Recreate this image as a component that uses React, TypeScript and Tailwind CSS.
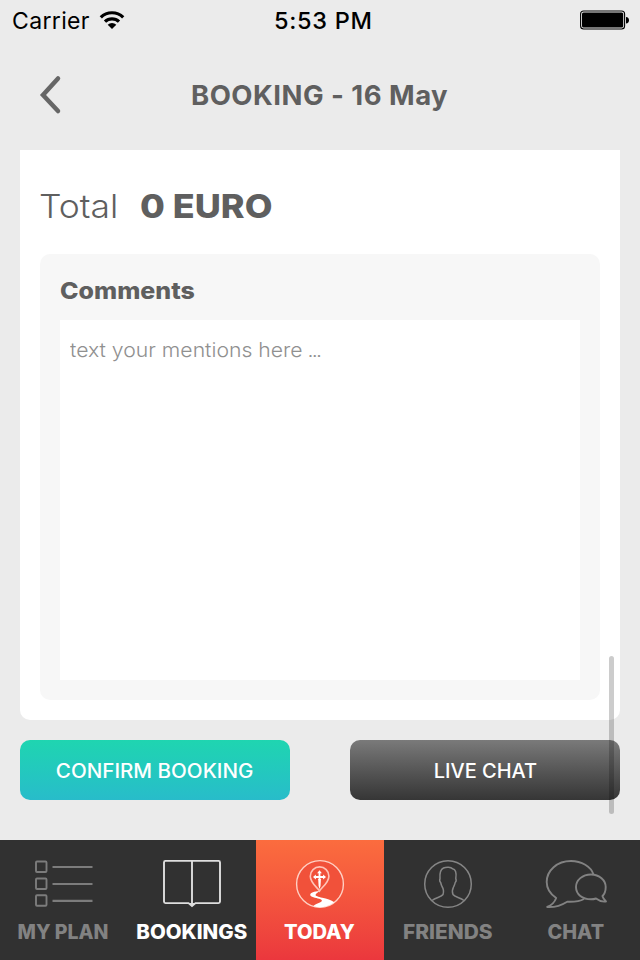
import React from "react";

function StatusBar() {
  return (
    <div className="relative flex h-10 items-center justify-between pl-3 pr-[11px] text-black">
      <div className="flex items-center gap-[9px]">
        <span className="pt-px text-[23px] leading-10 tracking-[0.35px]">Carrier</span>
        <svg width="26" height="20" viewBox="0 0 26 20" fill="none" stroke="#000" strokeWidth="3.2">
          <path d="M1.8 7.300A16 16 0 0 1 24.200 7.300" />
          <path d="M6 11.700A10 10 0 0 1 20 11.700" />
          <path d="M8.700 14.700a6.200 6.200 0 0 1 8.600 0L13 19z" fill="#000" stroke="none" />
        </svg>
      </div>
      <span className="absolute left-[274px] top-px text-[23.5px] font-medium leading-10 tracking-[0.700px] whitespace-nowrap">5:53 PM</span>
      <svg width="49" height="20" viewBox="0 0 49 20">
        <rect x="0.6" y="1" width="44" height="18" rx="3" fill="none" stroke="#000" strokeWidth="1.1" />
        <rect x="2" y="2.4" width="41.2" height="15.2" rx="1.5" />
        <path d="M46 7c4 0 4 6.600 0 6.600z" />
      </svg>
    </div>
  );
}

function PlanIcon() {
  return (
    <svg width="60" height="50" viewBox="0 0 60 50" fill="none" stroke="#7c7c7c" strokeWidth="1.9">
      <rect x="2" y="2.500" width="10.500" height="10.500" rx="1" />
      <rect x="2" y="19.500" width="10.500" height="10.500" rx="1" />
      <rect x="2" y="36.200" width="10.500" height="10.500" rx="1" />
      <path d="M18.500 8h40M18.500 25h40M18.500 41.800h40" strokeWidth="2.200" />
    </svg>
  );
}

function BookIcon() {
  return (
    <svg width="60" height="50" viewBox="0 0 60 50" fill="none" stroke="#dedede" strokeWidth="1.900">
      <path d="M3.500 1.900h53a1.500 1.500 0 0 1 1.500 1.500v39.200a1.500 1.500 0 0 1-1.500 1.500H33.500L30 47l-3.500-2.900h-23a1.500 1.500 0 0 1-1.500-1.500V3.400a1.500 1.500 0 0 1 1.500-1.500z" />
      <path d="M30 2v43" />
      <path d="M26.500 44h7L30 47z" fill="#dedede" stroke="none" />
    </svg>
  );
}

function TodayIcon() {
  return (
    <svg width="50" height="50" viewBox="0 0 50 50" fill="none">
      <circle cx="25" cy="25" r="23.400" fill="#f1513a" stroke="#ffd0c4" strokeWidth="1.400" />
      <path d="M24.500 32C22.500 28.500 15.300 23.800 15.300 17.200a9.300 9.300 0 0 1 18.600 0C33.900 23.800 26.500 28.500 24.500 32z" stroke="#ffc4b8" strokeWidth="1.600" />
      <path d="M24.500 13v8M19.500 18h10" stroke="#fff" strokeWidth="1.800" />
      <path d="M23.200 20h2.700l-.4 7-.9 3-1-3z" fill="#fff" />
      <path d="M24.500 11.300l2.400 2.900h-4.800zM18 18l2.900-2.500v5zM31 18l-2.900-2.500v5z" fill="#fff" />
      <path d="M24.300 32c-5 .6-8.900 1.500-9.100 3.700-.2 2.300 5.800 3 9 4 4.200 1.300 3 3-.5 4.300-2.500 1-4.500 1.900-5.200 3.300 7 2.200 14.500.500 20.800-4.100-3-2.300-7.500-3.500-12-4.500-4-1-7-1.700-6.700-3 .3-1.400 2.500-2.200 3.700-3.700z" fill="#fff" />
    </svg>
  );
}

function FriendsIcon() {
  return (
    <svg width="50" height="50" viewBox="0 0 50 50" fill="none" stroke="#858585" strokeWidth="1.500" strokeLinejoin="round">
      <circle cx="25" cy="25" r="23.300" />
      <path d="M9 41.500c4-3 9.500-3.500 11-6 1-3 .3-6-1-8-.8-1.500-1-2.500-1.300-4-1.200-1-1.200-2.500-.7-4-.5-6 .2-9 3.500-10.500 3-1.300 7.500-1 9 .8 3.500.6 4 5 3.300 9.700.6 1.500.5 3-.6 4-.3 2-1 3-1.700 4.500-1 2-1.500 5-.5 7.500 1.500 2.500 7 3 11 6" />
    </svg>
  );
}

function ChatIcon() {
  return (
    <svg width="64" height="50" viewBox="1 0 64 50" fill="none" stroke="#828282" strokeWidth="1.900" strokeLinejoin="round">
      <path d="M50.500 15.500C48 7.500 38.500 2 28 2 14 2 3.700 11.500 3.700 23c0 6.500 3.500 12 9.500 16-1.500 4-5 7.500-9 9 7.500.4 14-1.500 20-5.300C31.500 43 36.500 42.500 41 40" />
      <path d="M59.500 37c2.500-2.500 3.200-6 3.200-9C62.700 21.500 56.500 15.500 48 15.500s-15 5.500-15 12.500c0 7.500 6.500 12.300 15 12.300 2 0 3.500-.3 5-.8 3 2.300 6.500 3.500 10 3-1.500-1.500-3-3.200-3.500-5.200z" />
    </svg>
  );
}

const tabs = [
  { name: "MY PLAN", icon: <PlanIcon />, box: "", text: "text-[#828282] -translate-x-px" },
  { name: "BOOKINGS", icon: <BookIcon />, box: "", text: "text-white scale-x-[1.05]" },
  { name: "TODAY", icon: <TodayIcon />, box: "bg-linear-to-b from-[#fb6c3e] to-[#eb373d]", text: "text-white scale-x-[1.03] -translate-x-px" },
  { name: "FRIENDS", icon: <FriendsIcon />, box: "", text: "text-[#828282] scale-x-[1.07]" },
  { name: "CHAT", icon: <ChatIcon />, box: "", text: "text-[#828282] scale-x-[1.02]" },
];

export default function App() {
  return (
    <div className="relative flex h-[960px] w-[640px] flex-col overflow-hidden bg-[#ebebeb] font-['Inter',sans-serif] text-[#5f5f5f]">
      <StatusBar />
      <header className="flex h-[110px] items-center">
        <svg className="ml-[38px] shrink-0" width="24" height="42" viewBox="0 0 24 42" fill="none" stroke="#666" strokeWidth="4.500" strokeLinecap="round">
          <path d="M20 4.500L5 21 20 37" />
        </svg>
        <h1 className="ml-[129px] text-[27.500px] font-bold leading-10 tracking-[0.480px] whitespace-nowrap">BOOKING - 16 May</h1>
      </header>
      <main className="flex flex-col px-5">
        <section className="flex h-[570px] flex-col rounded-b-[10px] bg-white px-5 pb-5">
          <div className="flex h-[104px] items-center pt-2 text-[33px] leading-10">
            <span className="w-[100px] shrink-0 -translate-x-px font-[330]">
              <span className="inline-block origin-left scale-x-[1.075]">Total</span>
            </span>
            <span className="origin-left scale-x-[1.09] font-extrabold whitespace-nowrap">0 EURO</span>
          </div>
          <div className="flex flex-1 flex-col rounded-[10px] bg-[#f7f7f7] px-5 pb-5">
            <h2 className="h-[66px] origin-left scale-x-[1.085] pt-[22px] text-[23px] font-extrabold leading-[30px]">Comments</h2>
            <div className="flex-1 bg-white px-[10px] pt-[15px] text-[20px] font-[330] leading-[30px] text-[#909090]">
              <span className="inline-block origin-left scale-x-[1.06] whitespace-nowrap">
                text your mentions here <span className="-ml-px tracking-[-1.700px]">...</span>
              </span>
            </div>
          </div>
        </section>
        <div className="mt-5 flex h-[60px] justify-between text-[19.500px] font-[450] leading-[30px] text-white">
          <button className="w-[270px] rounded-[10px] bg-linear-to-b from-[#1fd5b0] to-[#28bcca] pt-[2px]">
            <span className="inline-block scale-x-[1.055]">CONFIRM BOOKING</span>
          </button>
          <button className="w-[270px] rounded-[10px] bg-linear-to-b from-[#7a7a7a] to-[#363636] pt-[2px]">
            <span className="inline-block scale-x-[1.025]">LIVE CHAT</span>
          </button>
        </div>
      </main>
      <nav className="mt-10 grid h-[120px] grid-cols-5 bg-[#313131]">
        {tabs.map((tab) => (
          <div key={tab.name} className={`flex flex-col items-center pt-[19px] ${tab.box}`}>
            {tab.icon}
            <span className={`mt-[8px] text-[19.500px] font-extrabold leading-[30px] whitespace-nowrap ${tab.text}`}>{tab.name}</span>
          </div>
        ))}
      </nav>
      <div className="absolute left-[609px] top-[656px] h-[158px] w-[5px] rounded-full bg-black/20" />
    </div>
  );
}
